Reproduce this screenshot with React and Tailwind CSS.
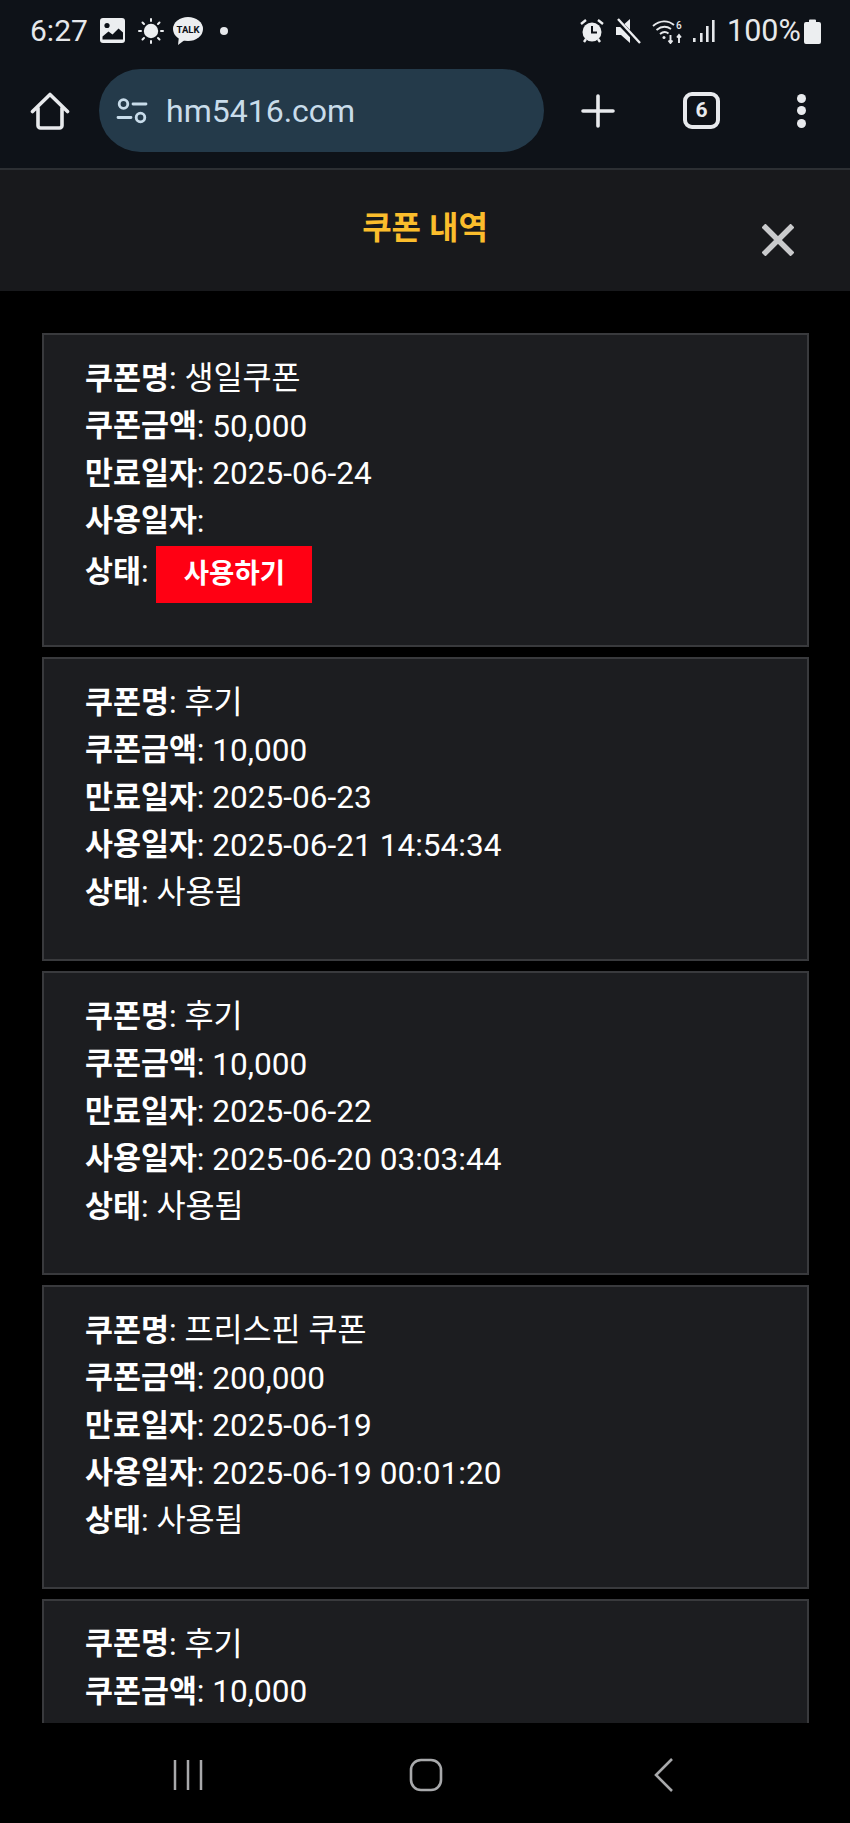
const FONT = 'font-["Roboto","Noto_Sans_CJK_KR",sans-serif]';

function Home() {
  return (
    <svg width="40" height="40" viewBox="0 0 40 40" fill="none" stroke="#e8eaed" strokeWidth="3.6" strokeLinejoin="round" strokeLinecap="round">
      <path d="M2.500 20.500 20 3.500l17.500 17M8 17v17.500a2.500 2.500 0 0 0 2.500 2.500h19a2.500 2.500 0 0 0 2.500-2.500V17" />
    </svg>
  );
}

function Tune() {
  return (
    <svg width="32" height="26" viewBox="0 0 32 26" fill="none" stroke="#c8dcea" strokeWidth="2.800" strokeLinecap="round">
      <circle cx="7.500" cy="6" r="4.300" />
      <circle cx="24.500" cy="19.500" r="4.300" />
      <path d="M17 6h13M2 19.500h13" />
    </svg>
  );
}

function StatusLeft() {
  return (
    <div className="flex items-center">
      <span className="text-[30px] leading-none text-[#e6e8eb] w-[70px]">6:27</span>
      <svg width="26" height="26" viewBox="0 0 26 26">
        <rect x="0" y="0" width="25" height="25" rx="3" fill="#eceef0" />
        <circle cx="7" cy="7.500" r="2.600" fill="#0d1117" />
        <path d="M2.500 21.500v-3l6-5 4 3 6-6 4.500 4v7z" fill="#0d1117" />
      </svg>
      <svg width="26" height="26" viewBox="0 0 26 26" className="ml-[12px]" stroke="#eceef0" strokeWidth="2" strokeLinecap="round">
        <circle cx="13" cy="13" r="7.200" fill="#eceef0" stroke="none" />
        <path d="M13 1v2M13 23v2M1 13h2M23 13h2M4.500 4.500 6 6M20 20l1.500 1.500M4.500 21.500 6 20M20 6l1.500-1.500" />
      </svg>
      <svg width="30" height="28" viewBox="0 0 30 28" className="ml-[9px]">
        <ellipse cx="15" cy="12" rx="15" ry="12" fill="#eceef0" />
        <path d="M6 19l-1 9 8-6z" fill="#eceef0" />
        <text x="15" y="15.500" textAnchor="middle" fontSize="9.500" fontWeight="700" fontFamily="Roboto" fill="#0d1117">TALK</text>
      </svg>
      <span className="ml-[17px] w-2 h-2 rounded-full bg-[#e6e8eb]" />
    </div>
  );
}

function StatusRight() {
  return (
    <div className="flex items-center">
      <svg width="24" height="26" viewBox="0 0 24 26" fill="none">
        <circle cx="12" cy="14" r="9.500" fill="#eceef0" />
        <path d="M12 8v6.500h5" stroke="#0d1117" strokeWidth="2" />
        <path d="M1 6l5-4M23 6l-5-4M4 24l2-3M20 24l-2-3" stroke="#eceef0" strokeWidth="2.400" />
      </svg>
      <svg width="26" height="26" viewBox="0 0 26 26" className="ml-[11px]">
        <path d="M1 9h5l9-8v24l-9-8H1z" fill="#eceef0" />
        <path d="M2 2l22 23" stroke="#0d1117" strokeWidth="5" />
        <path d="M3 1l22 24" stroke="#eceef0" strokeWidth="2.400" />
      </svg>
      <svg width="32" height="26" viewBox="0 0 32 26" fill="none" stroke="#e6e8eb" strokeWidth="1.900" className="ml-[11px]">
        <path d="M1 8c7-6 15-6 21-1M4.500 12c5-4 10-4 14.500-1M8 16c3-2.500 6-2.500 8.500-.500" />
        <circle cx="12" cy="19.500" r="1.500" fill="#e6e8eb" stroke="none" />
        <path d="M18.500 17v8M16.500 22.500l2 2.500 2-2.500M27 25v-8M25 19.500l2-2.500 2 2.500" />
        <text x="24" y="11" fontSize="10" fontFamily="Roboto" fontWeight="500" fill="#e6e8eb" stroke="none">6</text>
      </svg>
      <svg width="24" height="26" viewBox="0 0 24 26" fill="#e6e8eb" className="ml-[8px]">
        <rect x="1" y="20" width="2.600" height="4" />
        <rect x="8" y="15" width="2.600" height="9" />
        <rect x="14" y="8" width="2.600" height="16" />
        <rect x="20" y="2" width="2.600" height="22" />
      </svg>
      <span className="ml-[11px] text-[30.500px] leading-none text-[#e6e8eb] w-[77px]">100%</span>
      <svg width="17" height="26" viewBox="0 0 17 26">
        <path d="M5 2.500a1 1 0 0 1 1-1h5a1 1 0 0 1 1 1V4h3a2 2 0 0 1 2 2v18a2 2 0 0 1-2 2H2a2 2 0 0 1-2-2V6a2 2 0 0 1 2-2h3z" fill="#eceef0" />
      </svg>
    </div>
  );
}

function Chrome() {
  return (
    <div className="h-[170px] bg-[#0e1218] border-b-2 border-b-[#2c2f33] shrink-0">
      <div className="h-[69px] pl-[30px] pr-[29px] pb-[7px] flex items-center justify-between">
        <StatusLeft />
        <StatusRight />
      </div>
      <div className="flex items-center h-[83px]">
        <div className="w-[99px] flex justify-center pl-[1px]">
          <Home />
        </div>
        <div className="w-[445px] h-[83px] rounded-full bg-[#243a4a] flex items-center pl-[17px]">
          <Tune />
          <span className="ml-[18px] text-[32px] leading-none text-[#c9dcea]">hm5416.com</span>
        </div>
        <div className="flex-1 flex items-center">
          <svg width="34" height="34" viewBox="0 0 34 34" stroke="#e8eaed" strokeWidth="3.600" strokeLinecap="round" className="ml-[37px]">
            <path d="M17 2v30M2 17h30" />
          </svg>
          <div className="ml-[68px] w-[37px] h-[37px] rounded-[9px] border-4 border-[#e8eaed] flex items-center justify-center text-[21px] font-bold leading-none text-[#e8eaed]">
            6
          </div>
          <div className="ml-[77px] flex flex-col gap-[3.500px]">
            <span className="w-[9px] h-[9px] rounded-full bg-[#e8eaed]" />
            <span className="w-[9px] h-[9px] rounded-full bg-[#e8eaed]" />
            <span className="w-[9px] h-[9px] rounded-full bg-[#e8eaed]" />
          </div>
        </div>
      </div>
    </div>
  );
}

function Row({ label, children, tall }) {
  return (
    <div className={`${tall ? "h-[57.600px]" : "h-[47.600px]"} flex items-center whitespace-pre text-[31.600px] leading-none`}>
      <span className={`font-bold text-[30.400px] ${tall ? "-mt-[4px]" : ""}`}>{label}</span>
      <span className={tall ? "-mt-[4px]" : ""}>: </span>
      {children}
    </div>
  );
}

function Card({ name, amount, expire, used, button, clip }) {
  return (
    <div className={`bg-[#1c1d20] border-2 border-[#393a3d] pl-[41px] pt-[20px] mb-[10px] ${clip ? "pb-[170px]" : "pb-[42px]"}`}>
      <Row label="쿠폰명">{name}</Row>
      <Row label="쿠폰금액">{amount}</Row>
      {!clip && (
        <>
          <Row label="만료일자">{expire}</Row>
          <Row label="사용일자">{used}</Row>
          <Row label="상태" tall={button}>
            {button ? (
              <button className="w-[156px] h-[57px] bg-[#ff0013] text-white text-[27.500px] font-bold">
                사용하기
              </button>
            ) : (
              "사용됨"
            )}
          </Row>
        </>
      )}
    </div>
  );
}

export default function App() {
  return (
    <div className={`${FONT} w-[850px] h-[1823px] bg-black flex flex-col overflow-hidden`}>
      <Chrome />
      <div className="h-[121px] shrink-0 bg-[#18191c] relative flex justify-center">
        <span className="mt-[36px] text-[32px] leading-[45px] font-bold text-[#fbbd2c]">쿠폰 내역</span>
        <svg width="32" height="32" viewBox="0 0 32 32" stroke="#c9cacc" strokeWidth="5.500" className="absolute left-[762px] top-[54px]">
          <path d="M1.500 1.500l29 29M30.500 1.500l-29 29" />
        </svg>
      </div>
      <main className="h-[1432px] shrink-0 overflow-hidden pl-[42px] pr-[41px] pt-[42px] text-white">
        <Card name="생일쿠폰" amount="50,000" expire="2025-06-24" used="" button />
        <Card name="후기" amount="10,000" expire="2025-06-23" used="2025-06-21 14:54:34" />
        <Card name="후기" amount="10,000" expire="2025-06-22" used="2025-06-20 03:03:44" />
        <Card name="프리스핀 쿠폰" amount="200,000" expire="2025-06-19" used="2025-06-19 00:01:20" />
        <Card name="후기" amount="10,000" clip />
      </main>
      <nav className="bg-black flex-1 relative">
        <svg width="34" height="34" viewBox="0 0 34 34" stroke="#a8a9ab" strokeWidth="2.500" fill="none" className="absolute left-[171px] top-[35px]">
          <path d="M4 2v30M17 2v30M30 2v30" />
        </svg>
        <svg width="34" height="34" viewBox="0 0 34 34" stroke="#a8a9ab" strokeWidth="2.600" fill="none" className="absolute left-[409px] top-[35px]">
          <rect x="2" y="2" width="30" height="30" rx="10" />
        </svg>
        <svg width="24" height="36" viewBox="0 0 24 36" stroke="#a8a9ab" strokeWidth="2.600" fill="none" className="absolute left-[653px] top-[34px]">
          <path d="M19 2 3 18l16 16" />
        </svg>
      </nav>
    </div>
  );
}
